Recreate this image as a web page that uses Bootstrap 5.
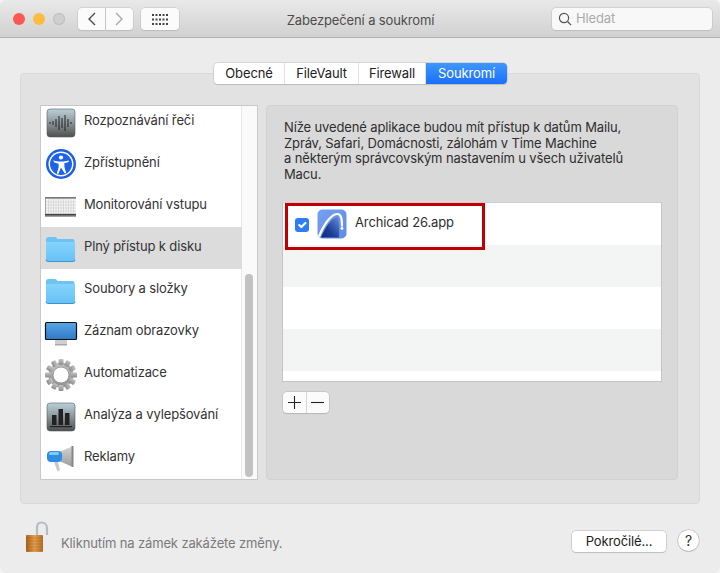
<!DOCTYPE html>
<html lang="cs">
<head>
<meta charset="UTF-8">
<title>Zabezpečení a soukromí</title>
<link href="https://cdn.jsdelivr.net/npm/bootstrap@5.3.0/dist/css/bootstrap.min.css" rel="stylesheet">
<style>
html, body { height: 573px; overflow: hidden; }
body { background: #f4f4f4; font-family: Inter, "Liberation Sans", sans-serif; font-size: 13px; color: #333; letter-spacing: -.13px; }
.win { width: 720px; height: 573px; background: #ececec; border-radius: 6px; overflow: hidden; }
.titlebar { height: 38px; background: linear-gradient(#e9e9e9, #d1d1d1); border-bottom: 1px solid #b1b1b1; padding: 8px 8px 0 13px; }
.light { width: 12px; height: 12px; border-radius: 50%; margin-top: 5px; margin-right: 8px; }
.light.red { background: #fc5753; }
.light.amber { background: #fdbc40; }
.light.off { background: #cfcfcf; box-shadow: inset 0 0 0 1px #bdbdbd; }
.navpair { margin-left: 5px; }
.mac-btn { background: #fbfbfb; border: 0; box-shadow: 0 0 0 .5px #c0c0c0, 0 1px 1px rgba(0,0,0,.12); height: 22px; border-radius: 4px; padding: 0; display: flex; align-items: center; justify-content: center; }
.mac-btn.back { width: 27px; border-radius: 4px 0 0 4px; }
.mac-btn.forward { width: 27px; margin-left: 1px; border-radius: 0 4px 4px 0; }
.mac-btn.allprefs { width: 38px; margin-left: 8px; }
.wintitle { font-size: 13px; color: #4d4d4d; padding-right: 10px; padding-top: 3px; }
.searchbox { width: 160px; height: 22px; background: #f8f8f8; border-radius: 4px; box-shadow: 0 0 0 .5px #c0c0c0, 0 1px 1px rgba(0,0,0,.1); padding-left: 6px; color: #aaa; }
.groupbox { margin: 35px 20px 0; height: 431px; background: #e2e2e2; border: 1px solid #d9d9d9; border-radius: 4px; padding: 0 19px; }
.tabstrip { margin-top: -11px; height: 21px; width: 293px; margin-left: 174px; background: #fff; border-radius: 4px; box-shadow: 0 0 0 .5px #bdbdbd, 0 1px 1px rgba(0,0,0,.15); overflow: hidden; color: #222; }
.tabstrip span { display: block; text-align: center; line-height: 20px; border-right: 1px solid #e2e2e2; }
.tabstrip .tab-a { width: 71px; }
.tabstrip .tab-b { width: 74px; }
.tabstrip .tab-c { width: 67px; }
.tabstrip .tab-d { width: 81px; background: linear-gradient(#3f97fb, #1a6ffa); color: #fff; border: 0; }
.sidelist { width: 218px; height: 375px; margin-top: 21px; background: #fff; border: 1px solid #c8c8c8; overflow: hidden; position: relative; flex: none; }
.sideitems { margin-top: -5px; width: 201px; border: 0; border-radius: 0; }
.sideitems .list-group-item { height: 42px; padding: 0 0 2px 43px; display: flex; align-items: center; border: 0; border-radius: 0; background: transparent; color: #333; position: relative; }
.sideitems .list-group-item.active { background: #dcdcdc; color: #333; margin: 0; }
.sideitems svg { position: absolute; left: 3px; top: 5px; }
.sidescroll { position: absolute; right: 0; top: 0; bottom: 0; width: 16px; background: #fafafa; border-left: 1px solid #e8e8e8; }
.sidethumb { position: absolute; left: 3px; width: 8px; top: 168px; height: 203px; background: #c2c2c2; border-radius: 4px; }
.rightpanel { width: 412px; height: 375px; margin: 21px 0 0 8px; background: #d9d9d9; border: 1px solid #d2d2d2; border-radius: 4px; padding: 14px 15px 0; }
.intro { line-height: 15.7px; margin: 0 0 0 2px; height: 82px; color: #2e2e2e; }
.apptable { width: 380px; height: 180px; background: #fff; border: 1px solid #c4c4c4; border-top: 1px solid #cfcfcf; overflow: hidden; position: relative; }
.approw { height: 42px; }
.approw.alt { background: #f3f5f5; }
.approw .form-check-input { width: 14px; height: 14px; margin: 1px 8px 0 12px; border: 0; border-radius: 3px; background-color: #2f7df6; flex: none; }
.redmark { position: absolute; left: 2px; top: 0; width: 200px; height: 47px; border: 3px solid #c00000; pointer-events: none; }
.appname { margin-left: 8px; margin-bottom: 2px; color: #2e2e2e; }
.plusminus { margin: 10px 0 0 1px; width: 46px; height: 21px; background: #fbfbfb; border-radius: 4px; box-shadow: 0 0 0 .5px #b5b5b5, 0 1px 1px rgba(0,0,0,.15); }
.plusminus span { flex: 1; display: flex; align-items: center; justify-content: center; }
.plusminus span:first-child { border-right: 1px solid #d6d6d6; }
.bottombar { padding: 17px 21px 0 25px; }
.locktext { margin-left: 11px; margin-top: 13px; color: #7a7a7a; }
.morebtn { width: 94px; height: 21px; margin-top: 10px; margin-left: auto; background: #fff; border: 0; border-radius: 4px; box-shadow: 0 0 0 .5px #b5b5b5, 0 1px 1px rgba(0,0,0,.15); color: #222; font-size: 13px; letter-spacing: inherit; padding: 0; }
.helpbtn { width: 21px; height: 21px; margin: 9px 0 0 12px; background: #fff; border: 0; border-radius: 50%; box-shadow: 0 0 0 .5px #b5b5b5, 0 1px 1px rgba(0,0,0,.2); color: #333; font-size: 14px; padding: 0; }
</style>
</head>
<body>
<svg width="0" height="0" class="position-absolute">
  <defs>
    <linearGradient id="tile" x1="0" y1="0" x2="0" y2="1"><stop offset="0" stop-color="#bcd0d8"/><stop offset=".5" stop-color="#8b9598"/><stop offset="1" stop-color="#4e4e4e"/></linearGradient>
    <linearGradient id="fold" x1="0" y1="0" x2="0" y2="1"><stop offset="0" stop-color="#84d4fc"/><stop offset="1" stop-color="#68c2f5"/></linearGradient>
    <linearGradient id="screen" x1="0" y1="0" x2="0" y2="1"><stop offset="0" stop-color="#5aa6e6"/><stop offset="1" stop-color="#2f78c8"/></linearGradient>
    <linearGradient id="gear" x1="0" y1="0" x2="0" y2="1"><stop offset="0" stop-color="#c4c4c4"/><stop offset="1" stop-color="#8e8e8e"/></linearGradient>
    <linearGradient id="arch" x1="0" y1="0" x2="1" y2="1"><stop offset="0" stop-color="#76a0f2"/><stop offset="1" stop-color="#5f8ae6"/></linearGradient>
    <linearGradient id="archd" x1="1" y1="0" x2="0" y2="1"><stop offset=".05" stop-color="#5f86dc"/><stop offset=".6" stop-color="#1d3f96"/><stop offset="1" stop-color="#0f2a72"/></linearGradient>
    <linearGradient id="brass" x1="0" y1="0" x2="1" y2="0"><stop offset="0" stop-color="#a95f1c"/><stop offset=".5" stop-color="#e2a04e"/><stop offset="1" stop-color="#b56f26"/></linearGradient>
    <linearGradient id="cone" x1="0" y1="0" x2="0" y2="1"><stop offset="0" stop-color="#d4d4d4"/><stop offset="1" stop-color="#9c9c9c"/></linearGradient>
    <symbol id="ico-folder" viewBox="0 0 32 32">
      <path d="M2 7.5Q2 5 4 5h7q1.5 0 2.5 2h15q2 0 2 2v18q0 2-2 2H4q-2 0-2-2z" fill="#6cc4f5"/>
      <path d="M2 10h29v17q0 2-2 2H4q-2 0-2-2z" fill="url(#fold)"/>
      <path d="M2 27.6q0 1.9 2 1.9h25q2 0 2-1.9" fill="none" stroke="#3c93d0" stroke-width="1"/>
    </symbol>
  </defs>
</svg>
<div class="win d-flex flex-column">
  <div class="titlebar d-flex">
    <div class="light red"></div>
    <div class="light amber"></div>
    <div class="light off"></div>
    <div class="d-flex navpair">
      <button class="mac-btn back"><svg width="9" height="14"><path d="M8 1 2 7l6 6" fill="none" stroke="#4a4a4a" stroke-width="1.4"/></svg></button>
      <button class="mac-btn forward"><svg width="9" height="14"><path d="m1 1 6 6-6 6" fill="none" stroke="#a8a8a8" stroke-width="1.4"/></svg></button>
    </div>
    <button class="mac-btn allprefs"><svg width="16" height="11" fill="#444"><rect x="0" y="0" width="2" height="2"/><rect x="3.5" y="0" width="2" height="2"/><rect x="7" y="0" width="2" height="2"/><rect x="10.5" y="0" width="2" height="2"/><rect x="14" y="0" width="2" height="2"/><rect x="0" y="4.5" width="2" height="2"/><rect x="3.5" y="4.5" width="2" height="2"/><rect x="7" y="4.5" width="2" height="2"/><rect x="10.5" y="4.5" width="2" height="2"/><rect x="14" y="4.5" width="2" height="2"/><rect x="0" y="9" width="2" height="2"/><rect x="3.5" y="9" width="2" height="2"/><rect x="7" y="9" width="2" height="2"/><rect x="10.5" y="9" width="2" height="2"/><rect x="14" y="9" width="2" height="2"/></svg></button>
    <div class="wintitle flex-grow-1 text-center">Zabezpečení a soukromí</div>
    <div class="searchbox d-flex align-items-center">
      <svg width="14" height="14" class="me-1"><circle cx="6" cy="6" r="4.6" fill="none" stroke="#555" stroke-width="1.2"/><path d="m9.5 9.5 3.6 3.6" stroke="#555" stroke-width="1.3"/></svg>
      <span>Hledat</span>
    </div>
  </div>

  <div class="groupbox">
    <div class="tabstrip d-flex">
      <span class="tab-a">Obecné</span>
      <span class="tab-b">FileVault</span>
      <span class="tab-c">Firewall</span>
      <span class="tab-d">Soukromí</span>
    </div>
    <div class="d-flex">
      <div class="sidelist">
        <div class="list-group sideitems">
          <div class="list-group-item">
            <svg width="32" height="32"><rect x="3" y="3" width="28" height="28" rx="3" fill="url(#tile)" stroke="#50606a" stroke-width=".6"/><g stroke="#222" stroke-width="1"><path d="M6 16v2M9 15v4M12 13v8M15 10v14M18 12v10M21 9v16M24 13v8M27 16v2"/></g></svg>
            Rozpoznávání řeči
          </div>
          <div class="list-group-item">
            <svg width="32" height="32"><circle cx="17" cy="16" r="15" fill="#1f5fe6"/><circle cx="17" cy="16" r="12.5" fill="#fff"/><circle cx="17" cy="16" r="11" fill="#1c63ea"/><circle cx="17" cy="9.5" r="2.1" fill="#fff"/><path d="M9 12.4 14.5 13.5h5l5.5-1.100-.4 1.700-4.200 1.200v3.600l1.900 6.400h-1.700L17 19.500l-2.600 6.300h-1.700l1.900-6.400v-3.600l-4.200-1.200z" fill="#fff"/></svg>
            Zpřístupnění
          </div>
          <div class="list-group-item">
            <svg width="32" height="32"><rect x="1" y="7" width="32" height="20" fill="#a2a2a2"/><rect x="1" y="7" width="32" height="1" fill="#777"/><rect x="2" y="9" width="30" height="14.5" fill="#f6f6f6"/><g stroke="#cfcfcf" stroke-width=".7"><path d="M2 12h30M2 15h30M2 18h30M2 21h30M4.500 9v14.500M7 9v14.500M9.500 9v14.500M12 9v14.500M14.500 9v14.500M17 9v14.500M19.500 9v14.500M22 9v14.500M24.500 9v14.500M27 9v14.500M29.500 9v14.500"/></g><rect x="1" y="24" width="32" height="1.5" fill="#444"/></svg>
            Monitorování vstupu
          </div>
          <div class="list-group-item active">
            <svg width="32" height="32"><use href="#ico-folder"/></svg>
            Plný přístup k disku
          </div>
          <div class="list-group-item">
            <svg width="32" height="32"><use href="#ico-folder"/></svg>
            Soubory a složky
          </div>
          <div class="list-group-item">
            <svg width="34" height="32"><rect x="1.5" y="6.5" width="31" height="17" rx="1" fill="url(#screen)" stroke="#111" stroke-width="1.2"/><rect x="11" y="24" width="12" height="4" fill="#d0d0d0"/><rect x="11" y="28" width="12" height="1.5" fill="#a8a8a8"/></svg>
            Záznam obrazovky
          </div>
          <div class="list-group-item">
            <svg width="34" height="34" viewBox="0 0 34 34"><g fill="url(#gear)"><circle cx="17" cy="17" r="12.5"/><g id="teeth"><rect x="14.5" y="1" width="5" height="6" rx="1"/><rect x="14.5" y="27" width="5" height="6" rx="1"/><rect x="1" y="14.5" width="6" height="5" rx="1"/><rect x="27" y="14.5" width="6" height="5" rx="1"/></g><use href="#teeth" transform="rotate(30 17 17)"/><use href="#teeth" transform="rotate(60 17 17)"/></g><circle cx="17" cy="17" r="8" fill="#fff"/><circle cx="17" cy="17" r="8" fill="none" stroke="#8a8a8a" stroke-width=".8"/></svg>
            Automatizace
          </div>
          <div class="list-group-item">
            <svg width="32" height="32"><rect x="3" y="3" width="28" height="28" rx="3" fill="url(#tile)" stroke="#50606a" stroke-width=".6"/><g fill="#222"><rect x="8" y="15" width="4.5" height="10"/><rect x="14.5" y="9" width="4.5" height="16"/><rect x="21" y="13" width="4.5" height="12"/><rect x="6" y="26" width="22" height="1.2"/></g></svg>
            Analýza a vylepšování
          </div>
          <div class="list-group-item">
            <svg width="32" height="32"><path d="M15 10 29 4v21l-14-6z" fill="url(#cone)"/><path d="M27.5 4h2v21h-2z" fill="#858585"/><rect x="3" y="9" width="15" height="11" rx="4" fill="#2c8fe6"/><rect x="5" y="10" width="10" height="3" rx="1.5" fill="#8cc8f7"/><path d="M10 20h4l2 8-2.500 1.500z" fill="#c9c9c9"/></svg>
            Reklamy
          </div>
        </div>
        <div class="sidescroll"><div class="sidethumb"></div></div>
      </div>
      <div class="rightpanel">
        <p class="intro">Níže uvedené aplikace budou mít přístup k datům Mailu,<br>Zpráv, Safari, Domácnosti, zálohám v Time Machine<br>a některým správcovským nastavením u všech uživatelů<br>Macu.</p>
        <div class="apptable">
          <div class="approw d-flex align-items-center">
            <input class="form-check-input" type="checkbox" checked>
            <svg width="30" height="30" viewBox="0 0 30 30"><rect width="29" height="29" x=".5" y=".5" rx="5" fill="url(#arch)"/><path d="M4 28.500C8 18 14 10 20.500 7.500c1.500 3 2 12 1.500 21z" fill="url(#archd)"/><path d="M2 27.500C7 15 14 5.500 20 5c4-.3 5 4.500 5 12.500" fill="none" stroke="#fff" stroke-width="2.200"/><circle cx="25" cy="19.500" r="1.400" fill="#fff"/></svg>
            <span class="appname">Archicad 26.app</span>
          </div>
          <div class="approw alt"></div>
          <div class="approw"></div>
          <div class="approw alt"></div>
          <div class="redmark"></div>
        </div>
        <div class="plusminus d-flex">
          <span><svg width="13" height="13"><path d="M6.500 0v13M0 6.500h13" stroke="#222" stroke-width="1.100"/></svg></span>
          <span><svg width="13" height="13"><path d="M0 6.500h13" stroke="#222" stroke-width="1.100"/></svg></span>
        </div>
      </div>
    </div>
  </div>

  <div class="bottombar d-flex">
    <svg width="25" height="32" class="flex-shrink-0"><path d="M12 15V6.500C12 3 14 1.500 16.500 1.500S22 3 22 7v7" fill="none" stroke="#b4bcc6" stroke-width="2.200"/><rect x="1" y="14" width="17" height="17" rx="1" fill="url(#brass)"/><g stroke="#8e4f14" stroke-width=".5" opacity=".6"><path d="M1 17h17M1 20h17M1 23h17M1 26h17M1 29h17"/></g></svg>
    <span class="locktext">Kliknutím na zámek zakážete změny.</span>
    <button class="morebtn">Pokročilé...</button>
    <button class="helpbtn">?</button>
  </div>
</div>
</body>
</html>
